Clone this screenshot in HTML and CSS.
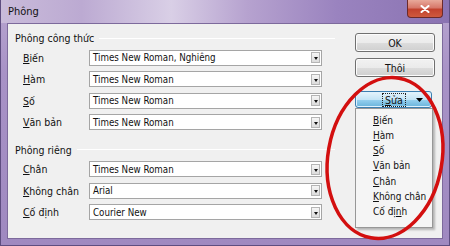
FILE: index.html
```html
<!DOCTYPE html>
<html>
<head>
<meta charset="utf-8">
<link rel="stylesheet" href="styles.css">
</head>
<body>
<div class="window">
  <div class="titlebar">
    <span class="title">Phông</span>
    <div class="close">
      <svg width="10" height="8" viewBox="0 0 10 8"><path d="M1.5 1 L8.5 7 M8.5 1 L1.5 7" stroke="#fff" stroke-width="2" stroke-linecap="round"/></svg>
    </div>
  </div>
  <div class="client">
    <div class="form">
      <div class="ghead"><span>Phông công thức</span><i class="rule"></i></div>
      <div class="rows">
        <div class="row"><span class="lbl"><u>B</u>iến</span><div class="combo"><span>Times New Roman, Nghiêng</span><b class="arrow"></b></div></div>
        <div class="row"><span class="lbl"><u>H</u>àm</span><div class="combo"><span>Times New Roman</span><b class="arrow"></b></div></div>
        <div class="row"><span class="lbl"><u>S</u>ố</span><div class="combo"><span>Times New Roman</span><b class="arrow"></b></div></div>
        <div class="row"><span class="lbl"><u>V</u>ăn bản</span><div class="combo"><span>Times New Roman</span><b class="arrow"></b></div></div>
      </div>
      <div class="ghead second"><span>Phông riêng</span><i class="rule"></i></div>
      <div class="rows">
        <div class="row"><span class="lbl"><u>C</u>hân</span><div class="combo"><span>Times New Roman</span><b class="arrow"></b></div></div>
        <div class="row"><span class="lbl"><u>K</u>hông chân</span><div class="combo"><span>Arial</span><b class="arrow"></b></div></div>
        <div class="row"><span class="lbl"><u>C</u>ố định</span><div class="combo"><span>Courier New</span><b class="arrow"></b></div></div>
      </div>
    </div>
    <div class="side">
      <div class="btn">OK</div>
      <div class="btn">Thôi</div>
      <div class="split">
        <span class="focus"><u>S</u>ửa</span>
        <svg class="tri" width="7" height="4" viewBox="0 0 7 4"><path d="M0 0 H7 L3.5 4 Z" fill="#000"/></svg>
      </div>
      <div class="menu">
        <div class="item"><u>B</u>iến</div>
        <div class="item"><u>H</u>àm</div>
        <div class="item"><u>S</u>ố</div>
        <div class="item"><u>V</u>ăn bản</div>
        <div class="item"><u>C</u>hân</div>
        <div class="item"><u>K</u>hông chân</div>
        <div class="item">Cố đị<u>n</u>h</div>
      </div>
    </div>
  </div>
</div>
<svg class="annot" width="450" height="246" viewBox="0 0 450 246">
  <ellipse cx="385" cy="158" rx="57" ry="81" transform="rotate(10 385 158)" fill="none" stroke="#d30f0f" stroke-width="3.5"/>
</svg>
</body>
</html>
```

FILE: styles.css
```css
* { box-sizing: border-box; }
html, body { margin: 0; padding: 0; }
body {
  width: 450px;
  height: 246px;
  overflow: hidden;
  position: relative;
  font-family: "Liberation Sans Narrow", "DejaVu Sans Condensed", "Liberation Sans", Arial, sans-serif;
  font-size: 10px;
  color: #111;
  background: #9e8bbf;
}
u { text-decoration: underline; text-underline-offset: 1px; }

.window {
  width: 450px;
  height: 246px;
  display: flex;
  flex-direction: column;
  padding: 0 6px 6px 6px;
  border-left: 1px solid #5e4d80;
  border-right: 1px solid #5e4d80;
  border-bottom: 1px solid #5e4d80;
  background: linear-gradient(180deg, #b8a6d0 0%, #a892c6 30%, #9f89c0 100%);
}

.titlebar {
  height: 23px;
  flex: none;
  display: flex;
  align-items: flex-start;
  justify-content: space-between;
  margin: 0 -6px;
  padding: 0 6px 0 7px;
  background: linear-gradient(90deg, #c9bbda 0%, #bcaad2 18%, #d9cfe6 38%, #b6a2cf 55%, #9a83bf 75%, #8a73b2 100%);
}
.title {
  line-height: 23px;
  font-size: 11px;
  color: #111;
}
.close {
  width: 36px;
  height: 18px;
  border: 1px solid #6b2a2a;
  border-top: none;
  border-radius: 0 0 4px 4px;
  background: linear-gradient(180deg, #e8a99a 0%, #d7786a 45%, #c2422e 55%, #cf5a3e 100%);
  display: flex;
  align-items: center;
  justify-content: center;
}

.client {
  flex: 1;
  display: flex;
  background: #f0f0f0;
  border: 1px solid #7d6a9c;
}

.form {
  width: 327px;
  padding: 8px 0 0 7px;
}
.ghead {
  height: 12px;
  display: flex;
  align-items: center;
  gap: 5px;
  font-size: 10.5px;
}
.ghead .rule {
  flex: 1;
  height: 1px;
  background: #d5d5d5;
  border-bottom: 1px solid #fff;
}
.ghead.second { margin-top: 13.5px; }
.rows {
  margin-top: 5.5px;
  padding-left: 8px;
  display: flex;
  flex-direction: column;
  gap: 5.5px;
}
.row {
  height: 16px;
  display: flex;
  align-items: center;
  font-size: 10.5px;
}
.lbl {
  width: 66px;
  flex: none;
}
.combo {
  width: 233px;
  height: 16px;
  border: 1px solid #a5a5a5;
  background: #fff;
  display: flex;
  align-items: center;
  justify-content: space-between;
  padding: 0 1px 0 3px;
  font-size: 9.7px;
}
.arrow {
  width: 9px;
  height: 11px;
  border: 1px solid #b5b5b5;
  background: linear-gradient(180deg, #f6f6f6, #dcdcdc);
  position: relative;
}
.arrow::after {
  content: "";
  position: absolute;
  left: 1.5px;
  top: 4px;
  border-left: 2.5px solid transparent;
  border-right: 2.5px solid transparent;
  border-top: 3px solid #111;
}

.side {
  width: 80px;
  margin-left: 20px;
  padding-top: 9px;
  display: flex;
  flex-direction: column;
}
.btn {
  height: 19px;
  border: 1px solid #707070;
  border-radius: 3px;
  background: linear-gradient(180deg, #f2f2f2 0%, #ebebeb 50%, #dddddd 51%, #cfcfcf 100%);
  display: flex;
  align-items: center;
  justify-content: center;
  box-shadow: inset 0 0 0 1px #fcfcfc;
  font-size: 10.5px;
}
.btn + .btn { margin-top: 6px; }

.split {
  margin-top: 14px;
  width: 77px;
  height: 17px;
  border: 1px solid #3c7fb1;
  border-radius: 3px;
  background: linear-gradient(180deg, #e5f4fc 0%, #c4e5f6 50%, #98d1ef 51%, #68b3db 100%);
  display: flex;
  align-items: center;
  position: relative;
  box-shadow: inset 0 0 0 1px #dff2fd;
  font-size: 10.5px;
}
.focus {
  margin-left: 27px;
  padding: 0 2px;
  outline: 1px dotted #222;
  line-height: 12px;
}
.tri {
  position: absolute;
  right: 8px;
  top: 6px;
}

.menu {
  width: 78px;
  padding: 3.5px 0 7px 0;
  border: 1px solid #979797;
  background: #f5f5f5;
  box-shadow: 2px 2px 2px rgba(0,0,0,0.25);
  font-size: 10px;
}
.item {
  height: 15.3px;
  line-height: 15.3px;
  padding-left: 17px;
}

.annot {
  position: absolute;
  left: 0;
  top: 0;
  pointer-events: none;
}
```
